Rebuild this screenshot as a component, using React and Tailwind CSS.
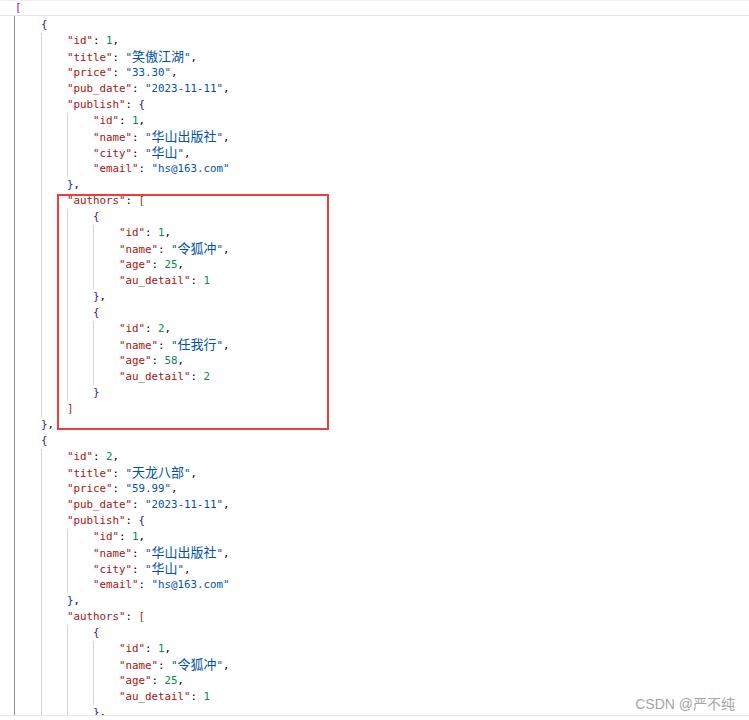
import React from 'react';

// 书籍接口返回的数据
const books = [
    {
        id: 1,
        title: '笑傲江湖',
        price: '33.30',
        pub_date: '2023-11-11',
        publish: { id: 1, name: '华山出版社', city: '华山', email: 'hs@163.com' },
        authors: [
            { id: 1, name: '令狐冲', age: 25, au_detail: 1 },
            { id: 2, name: '任我行', age: 58, au_detail: 2 },
        ],
    },
    {
        id: 2,
        title: '天龙八部',
        price: '59.99',
        pub_date: '2023-11-11',
        publish: { id: 1, name: '华山出版社', city: '华山', email: 'hs@163.com' },
        authors: [
            { id: 1, name: '令狐冲', age: 25, au_detail: 1 },
            { id: 2, name: '任我行', age: 58, au_detail: 2 },
        ],
    },
];

const hasCjk = (s) => /[\u3000-\u9fff]/.test(s);

function Str({ text }) {
    // los caracteres CJK ocupan dos columnas
    const parts = text.split(/([\u3000-\u9fff]+)/).filter(Boolean);
    return (
        <span className="text-[#0451a5]">
            "
            {parts.map((p, i) =>
                hasCjk(p) ? (
                    <span key={i} className="text-[13px]">{p}</span>
                ) : (
                    <span key={i}>{p}</span>
                )
            )}
            "
        </span>
    );
}

function Key({ name }) {
    if (name === undefined) return null;
    return (
        <>
            <span className="text-[#a31515]">"{name}"</span>
            <span>: </span>
        </>
    );
}

function Line({ children }) {
    return <div className="h-4 leading-4 whitespace-pre">{children}</div>;
}

function Node({ value, name, last }) {
    const comma = last ? '' : ',';
    if (value !== null && typeof value === 'object') {
        const isArr = Array.isArray(value);
        const entries = isArr ? value.map((v) => [undefined, v]) : Object.entries(value);
        const color = isArr ? 'text-[#7b3814]' : 'text-[#1d1d9a]';
        return (
            <div>
                <Line>
                    <Key name={name} />
                    <span className={color}>{isArr ? '[' : '{'}</span>
                </Line>
                <div className="border-l border-[#d4d4d4] pl-[25px]">
                    {entries.map(([k, v], i) => (
                        <Node key={i} name={k} value={v} last={i === entries.length - 1} />
                    ))}
                </div>
                <Line>
                    <span className={color}>{isArr ? ']' : '}'}</span>
                    {comma}
                </Line>
            </div>
        );
    }
    return (
        <Line>
            <Key name={name} />
            {typeof value === 'string' ? (
                <Str text={value} />
            ) : (
                <span className="text-[#098658]">{value}</span>
            )}
            {comma}
        </Line>
    );
}

export default function App() {
    return (
        <div
            className="relative w-[749px] h-[720px] bg-white text-[#000] text-[10.8px] border-t border-[#f0f0f0] overflow-hidden"
            style={{ fontFamily: '"DejaVu Sans Mono", "Noto Sans CJK SC", monospace' }}
        >
            <div className="h-[14px] leading-[14px] pl-[15px] text-[#7a2e8e]">[</div>
            <div className="h-[701px] border-t border-b border-[#e6e6e6] overflow-hidden">
                <div className="ml-[14px] h-full border-l border-[#8e8e8e] pl-[26px] pt-px">
                    {books.map((b, i) => (
                        <Node key={i} value={b} last={i === books.length - 1} />
                    ))}
                </div>
            </div>

            {/* recuadro rojo de anotación */}
            <div className="absolute left-[57px] top-[193px] w-[272px] h-[236px] border-2 border-[#f23c3c]"></div>

            <div
                className="absolute right-[14px] top-[695px] text-[14px] leading-4 text-[#a6a6a6]"
                style={{ fontFamily: '"Liberation Sans", "Noto Sans CJK SC", sans-serif' }}
            >
                CSDN @严不纯
            </div>
        </div>
    );
}
